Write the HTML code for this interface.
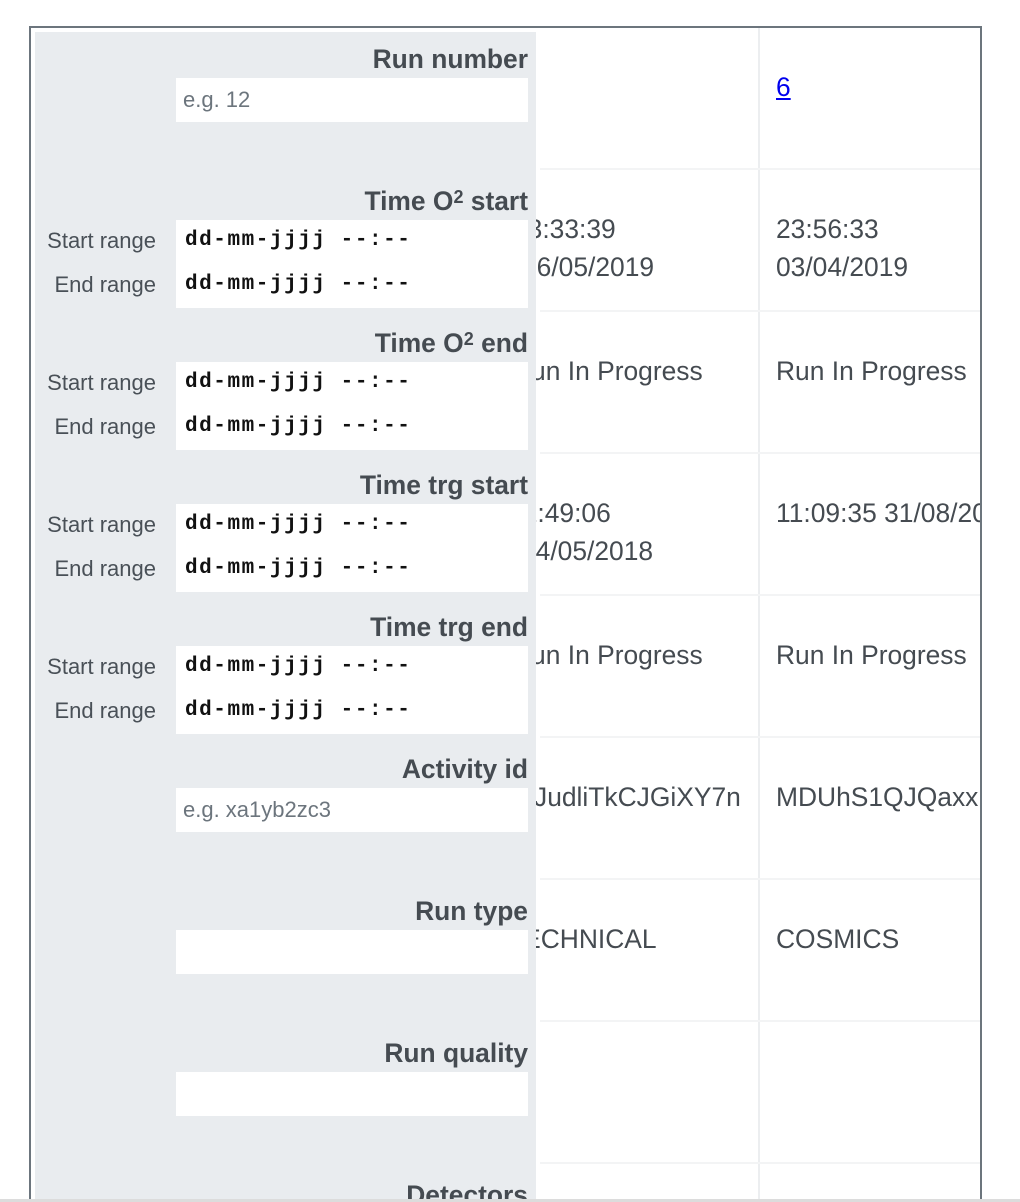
<!DOCTYPE html>
<html><head><meta charset="utf-8"><style>
*{margin:0;padding:0;box-sizing:border-box}
html,body{width:1020px;height:1202px;overflow:hidden;background:#fff;font-family:"Liberation Sans",sans-serif}
.frame{position:absolute;left:29px;top:26px;width:953px;height:1176px;border:2px solid #6c757d;border-bottom:none;overflow:hidden}
.a{position:absolute}
.panel{position:absolute;left:35px;top:32px;width:501px;height:1170px;background:#e9ecef;z-index:2}
.lab{position:absolute;right:492px;width:400px;text-align:right;font-weight:bold;font-size:26.4px;color:#454b51;height:30px;line-height:30px;z-index:3}
.inp{position:absolute;left:176px;width:352px;background:#fff;z-index:3}
.ph{position:absolute;left:183px;font-size:22px;color:#6c757d;height:30px;line-height:30px;z-index:4}
.rl{position:absolute;right:864px;width:150px;text-align:right;font-size:22px;color:#495057;height:30px;line-height:30px;z-index:4}
.dt{position:absolute;left:185px;font-family:"Liberation Mono",monospace;font-weight:bold;font-size:21px;letter-spacing:1.55px;color:#111;height:30px;line-height:30px;z-index:4}
.hl{position:absolute;left:540px;width:440px;height:2px;background:#f3f4f5;z-index:1}
.c{position:absolute;font-size:26.4px;color:#454b51;height:38px;line-height:38px;white-space:nowrap;z-index:1}
.c1{left:510px}.c2{left:776px}
.vl{position:absolute;left:758px;top:28px;width:2px;height:1174px;background:#eceef0}
.clip{position:absolute;left:31px;top:28px;width:949px;height:1174px;overflow:hidden}
sup{font-size:18px;position:relative;top:2px;vertical-align:top;line-height:1;font-weight:bold}
</style></head><body>
<div class="frame"></div>
<div class="clip">
<div style="position:absolute;left:-31px;top:-28px;width:1020px;height:1202px">
<div class="vl"></div>
<div class="hl" style="top:168px"></div>
<div class="hl" style="top:310px"></div>
<div class="hl" style="top:452px"></div>
<div class="hl" style="top:594px"></div>
<div class="hl" style="top:736px"></div>
<div class="hl" style="top:878px"></div>
<div class="hl" style="top:1020px"></div>
<div class="hl" style="top:1162px"></div>

<div class="c c2" style="top:68px"><a href="#" style="color:#0000ee;text-decoration:underline">6</a></div>
<div class="c c1" style="top:210px;left:513px">13:33:39</div>
<div class="c c1" style="top:248px;left:522px">16/05/2019</div>
<div class="c c2" style="top:210px">23:56:33</div>
<div class="c c2" style="top:248px">03/04/2019</div>
<div class="c c1" style="top:352px;left:512px">Run In Progress</div>
<div class="c c2" style="top:352px">Run In Progress</div>
<div class="c c1" style="top:494px;left:510px">11:49:06</div>
<div class="c c1" style="top:532px;left:521px">14/05/2018</div>
<div class="c c2" style="top:494px">11:09:35 31/08/2018</div>
<div class="c c1" style="top:636px;left:512px">Run In Progress</div>
<div class="c c2" style="top:636px">Run In Progress</div>
<div class="c c1" style="top:778px;left:534px">JudliTkCJGiXY7n</div>
<div class="c c2" style="top:778px">MDUhS1QJQaxxMzNb</div>
<div class="c c1" style="top:920px;left:507px">TECHNICAL</div>
<div class="c c2" style="top:920px">COSMICS</div>

<div class="panel"></div>

<div class="lab" style="top:44px">Run number</div>
<div class="inp" style="top:78px;height:44px"></div>
<div class="ph" style="top:85px">e.g. 12</div>

<div class="lab" style="top:186px">Time O<sup>2</sup> start</div>
<div class="inp" style="top:220px;height:88px"></div>
<div class="rl" style="top:226px">Start range</div><div class="dt" style="top:226px">dd-mm-jjjj --:--</div>
<div class="rl" style="top:270px">End range</div><div class="dt" style="top:270px">dd-mm-jjjj --:--</div>

<div class="lab" style="top:328px">Time O<sup>2</sup> end</div>
<div class="inp" style="top:362px;height:88px"></div>
<div class="rl" style="top:368px">Start range</div><div class="dt" style="top:368px">dd-mm-jjjj --:--</div>
<div class="rl" style="top:412px">End range</div><div class="dt" style="top:412px">dd-mm-jjjj --:--</div>

<div class="lab" style="top:470px">Time trg start</div>
<div class="inp" style="top:504px;height:88px"></div>
<div class="rl" style="top:510px">Start range</div><div class="dt" style="top:510px">dd-mm-jjjj --:--</div>
<div class="rl" style="top:554px">End range</div><div class="dt" style="top:554px">dd-mm-jjjj --:--</div>

<div class="lab" style="top:612px">Time trg end</div>
<div class="inp" style="top:646px;height:88px"></div>
<div class="rl" style="top:652px">Start range</div><div class="dt" style="top:652px">dd-mm-jjjj --:--</div>
<div class="rl" style="top:696px">End range</div><div class="dt" style="top:696px">dd-mm-jjjj --:--</div>

<div class="lab" style="top:754px">Activity id</div>
<div class="inp" style="top:788px;height:44px"></div>
<div class="ph" style="top:795px">e.g. xa1yb2zc3</div>

<div class="lab" style="top:896px">Run type</div>
<div class="inp" style="top:930px;height:44px"></div>

<div class="lab" style="top:1038px">Run quality</div>
<div class="inp" style="top:1072px;height:44px"></div>

<div class="lab" style="top:1180px">Detectors</div>
</div>
</div>
<div class="a" style="left:0;top:1199px;width:1020px;height:3px;background:#dcdcdc;z-index:10"></div>
</body></html>
